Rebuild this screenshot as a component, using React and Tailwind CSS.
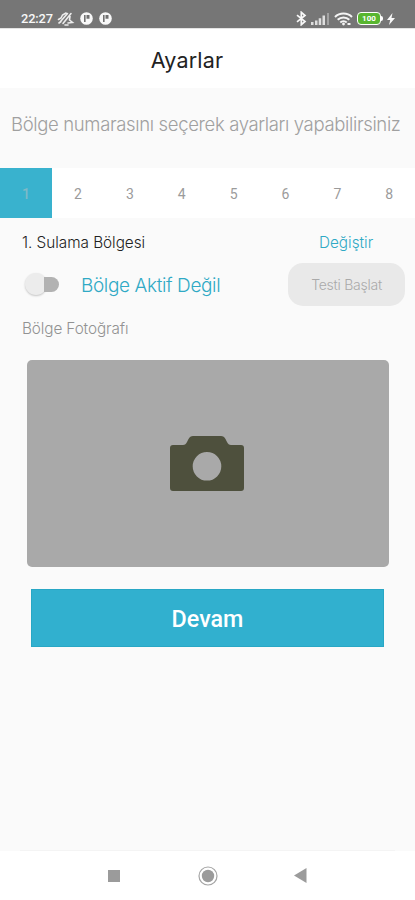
const zones = [1, 2, 3, 4, 5, 6, 7, 8];

function VibrateOff() {
  return (
    <svg width="18" height="16" viewBox="0 0 18 16" fill="none" stroke="#ececec" strokeWidth="1.600" strokeLinecap="round">
      <path d="M1.500 8.500 4 7l1.500-3L9 2M3.500 10.500 10.500 2.500M6 12.500 14 2.500M13 5.500 12.500 9l3 2.500-4.500.5M8 14h3M2 12l2-1.500" />
    </svg>
  );
}

function BadgeP() {
  return (
    <svg width="13" height="13" viewBox="0 0 13 13">
      <circle cx="6.5" cy="6.5" r="6.300" fill="#f8f8f8" />
      <path d="M4 3h1.600v7H4zM6.500 3h3v3.800h-3z" fill="#717171" />
    </svg>
  );
}

function StatusBar() {
  return (
    <div className="flex h-7 shrink-0 items-end bg-[#767676] text-[#f8f8f8]">
      <div className="ml-[21px] flex h-[19px] items-center">
        <span className="w-[34px] whitespace-nowrap pt-px font-[Roboto] text-[12.8px] font-medium tracking-[-0.1px]">22:27</span>
        <span className="ml-[2px]"><VibrateOff /></span>
        <span className="ml-[5px]"><BadgeP /></span>
        <span className="ml-[6px]"><BadgeP /></span>
      </div>
      <div className="mr-[20px] ml-auto flex h-[19px] items-center">
        <svg width="11" height="15" viewBox="0 0 11 15" fill="none" stroke="#f8f8f8" strokeWidth="1.700">
          <path d="M1 4.200 9 10.500 5.300 13.700V1.300L9 4.500 1 10.800" />
        </svg>
        <svg className="ml-[4px]" width="19" height="13" viewBox="0 0 19 13">
          <path d="M0 10h2.500v3H0zM4 8.500h2.500V13H4zM7.700 6.200h2.500V13H7.700zM11.500 3.500H14V13h-2.500z" fill="#dedede" />
          <path d="M16 1h2v12h-2z" fill="#a2a2a2" />
        </svg>
        <svg className="ml-[4px]" width="19" height="14" viewBox="0 0 19 14" fill="none" stroke="#f4f4f4" strokeWidth="2">
          <path d="M1 5c4.600-4.600 12.400-4.600 17 0M3.700 7.800c3.200-3.200 8.400-3.200 11.600 0M6.300 10.400c1.800-1.700 4.600-1.700 6.400 0" />
          <circle cx="9.500" cy="12" r="1.400" fill="#f4f4f4" stroke="none" />
          <path d="M13.500 12h3" />
        </svg>
        <div className="ml-[4px] flex h-[13px] w-[24px] items-center justify-center rounded-[4px] border-[1.5px] border-white bg-[#58b62f] font-[Roboto] text-[8px] leading-none font-bold text-white">100</div>
        <span className="h-[5px] w-[2px] rounded-r bg-white" />
        <svg className="ml-[4px]" width="8" height="12" viewBox="0 0 8 12">
          <path d="M5.500 0 0 7h3.200L2 12l6-7H4.500z" fill="#f8f8f8" />
        </svg>
      </div>
    </div>
  );
}

export default function App() {
  return (
    <div className="flex h-[900px] w-[415px] flex-col overflow-hidden bg-[#fafafa] font-[Inter,Roboto,sans-serif] whitespace-nowrap">
      <StatusBar />
      <header className="flex h-[60px] shrink-0 items-center justify-center border-t border-[#e4e4e4] bg-white pt-[4px]">
        <h1 className="-ml-[41px] text-[21.5px] tracking-[0.2px] text-[#222]">Ayarlar</h1>
      </header>
      <p className="flex h-20 shrink-0 items-center pb-[6px] pl-[11px] text-[18.5px] font-light tracking-[-0.35px] text-[#a0a0a0]">
        Bölge numarasını seçerek ayarları yapabilirsiniz
      </p>
      <nav className="flex h-[50px] shrink-0 bg-white font-[Roboto,sans-serif] text-[14px] text-[#9b9b9b]">
        {zones.map((zone) => (
          <button key={zone} className={zone === 1 ? "w-[52px] shrink-0 bg-[#39b2ce] pt-[2px] font-medium text-[#7fb9c7]" : "w-[51.9px] shrink-0 pt-[2px]"}>
            {zone}
          </button>
        ))}
      </nav>
      <div className="flex h-[44px] shrink-0 items-center pt-[6px] pl-[22px]">
        <span className="w-[297px] text-[15.3px] font-light tracking-[-0.02px] text-[#222]">1. Sulama Bölgesi</span>
        <button className="text-[15.3px] font-light tracking-[0px] text-[#2fa9c5]">Değiştir</button>
      </div>
      <div className="flex h-[44px] shrink-0 items-center pl-[25px]">
        <button role="switch" aria-checked="false" aria-label="Bölge" className="flex h-[22px] w-[34px] items-center">
          <span className="h-[22px] w-[22px] shrink-0 rounded-full bg-[#ececec] shadow-[0_1px_2px_#c4c4c4]" />
          <span className="-ml-[3px] h-[15px] w-[15px] rounded-r-full bg-[#b2b2b2]" />
        </button>
        <span className="ml-[22px] w-[207px] pt-[4px] text-[19px] font-light tracking-[-0.38px] text-[#2fa9c5]">Bölge Aktif Değil</span>
        <button className="h-[43px] w-[117px] rounded-[15px] bg-[#e9e9e9] text-[14px] font-light tracking-[-0.25px] text-[#aaa]">Testi Başlat</button>
      </div>
      <div className="flex h-[54px] shrink-0 items-start pt-[12px] pl-[22px] text-[15.3px] font-light tracking-[-0.1px] text-[#929292]">Bölge Fotoğrafı</div>
      <button aria-label="Bölge Fotoğrafı" className="ml-[27px] flex h-[207px] w-[362px] shrink-0 items-center justify-center rounded-[5px] bg-[#a9a9a9] pr-[2px]">
        <svg width="74" height="55" viewBox="0 0 74 55">
          <path fill="#4e503d" fillRule="evenodd" d="M3 9h10c2 0 3-1 4-3l1.500-3C19.500 1 21 0 23 0h28c2 0 3.500 1 4.500 3L57 6c1 2 2 3 4 3h10a3 3 0 0 1 3 3v40a3 3 0 0 1-3 3H3a3 3 0 0 1-3-3V12a3 3 0 0 1 3-3Zm34 7a14.300 14.300 0 1 0 0 28.600A14.300 14.300 0 0 0 37 16Z" />
        </svg>
      </button>
      <button className="mt-[22px] ml-[31px] flex h-[58px] w-[353px] shrink-0 items-center justify-center border border-[#28a7c5] bg-[#31b0cf] pt-[3px] font-[Roboto,sans-serif] text-[23.3px] font-medium text-white">Devam</button>
      <div className="mx-5 mt-auto h-px shrink-0 bg-[#f4f4f4]" />
      <footer className="flex h-[49px] shrink-0 items-center bg-white">
        <svg className="ml-[107px]" width="14" height="14"><path d="M1 1h12v12H1z" fill="#9b9b9b" /></svg>
        <svg className="ml-[77px]" width="20" height="20" viewBox="0 0 20 20">
          <circle cx="10" cy="10" r="9" fill="none" stroke="#a5a5a5" strokeWidth="1.200" />
          <circle cx="10" cy="10" r="6.200" fill="#9b9b9b" />
        </svg>
        <svg className="ml-[76px]" width="13" height="15"><path d="M12.500 0v15L0 7.500z" fill="#9b9b9b" /></svg>
      </footer>
    </div>
  );
}
